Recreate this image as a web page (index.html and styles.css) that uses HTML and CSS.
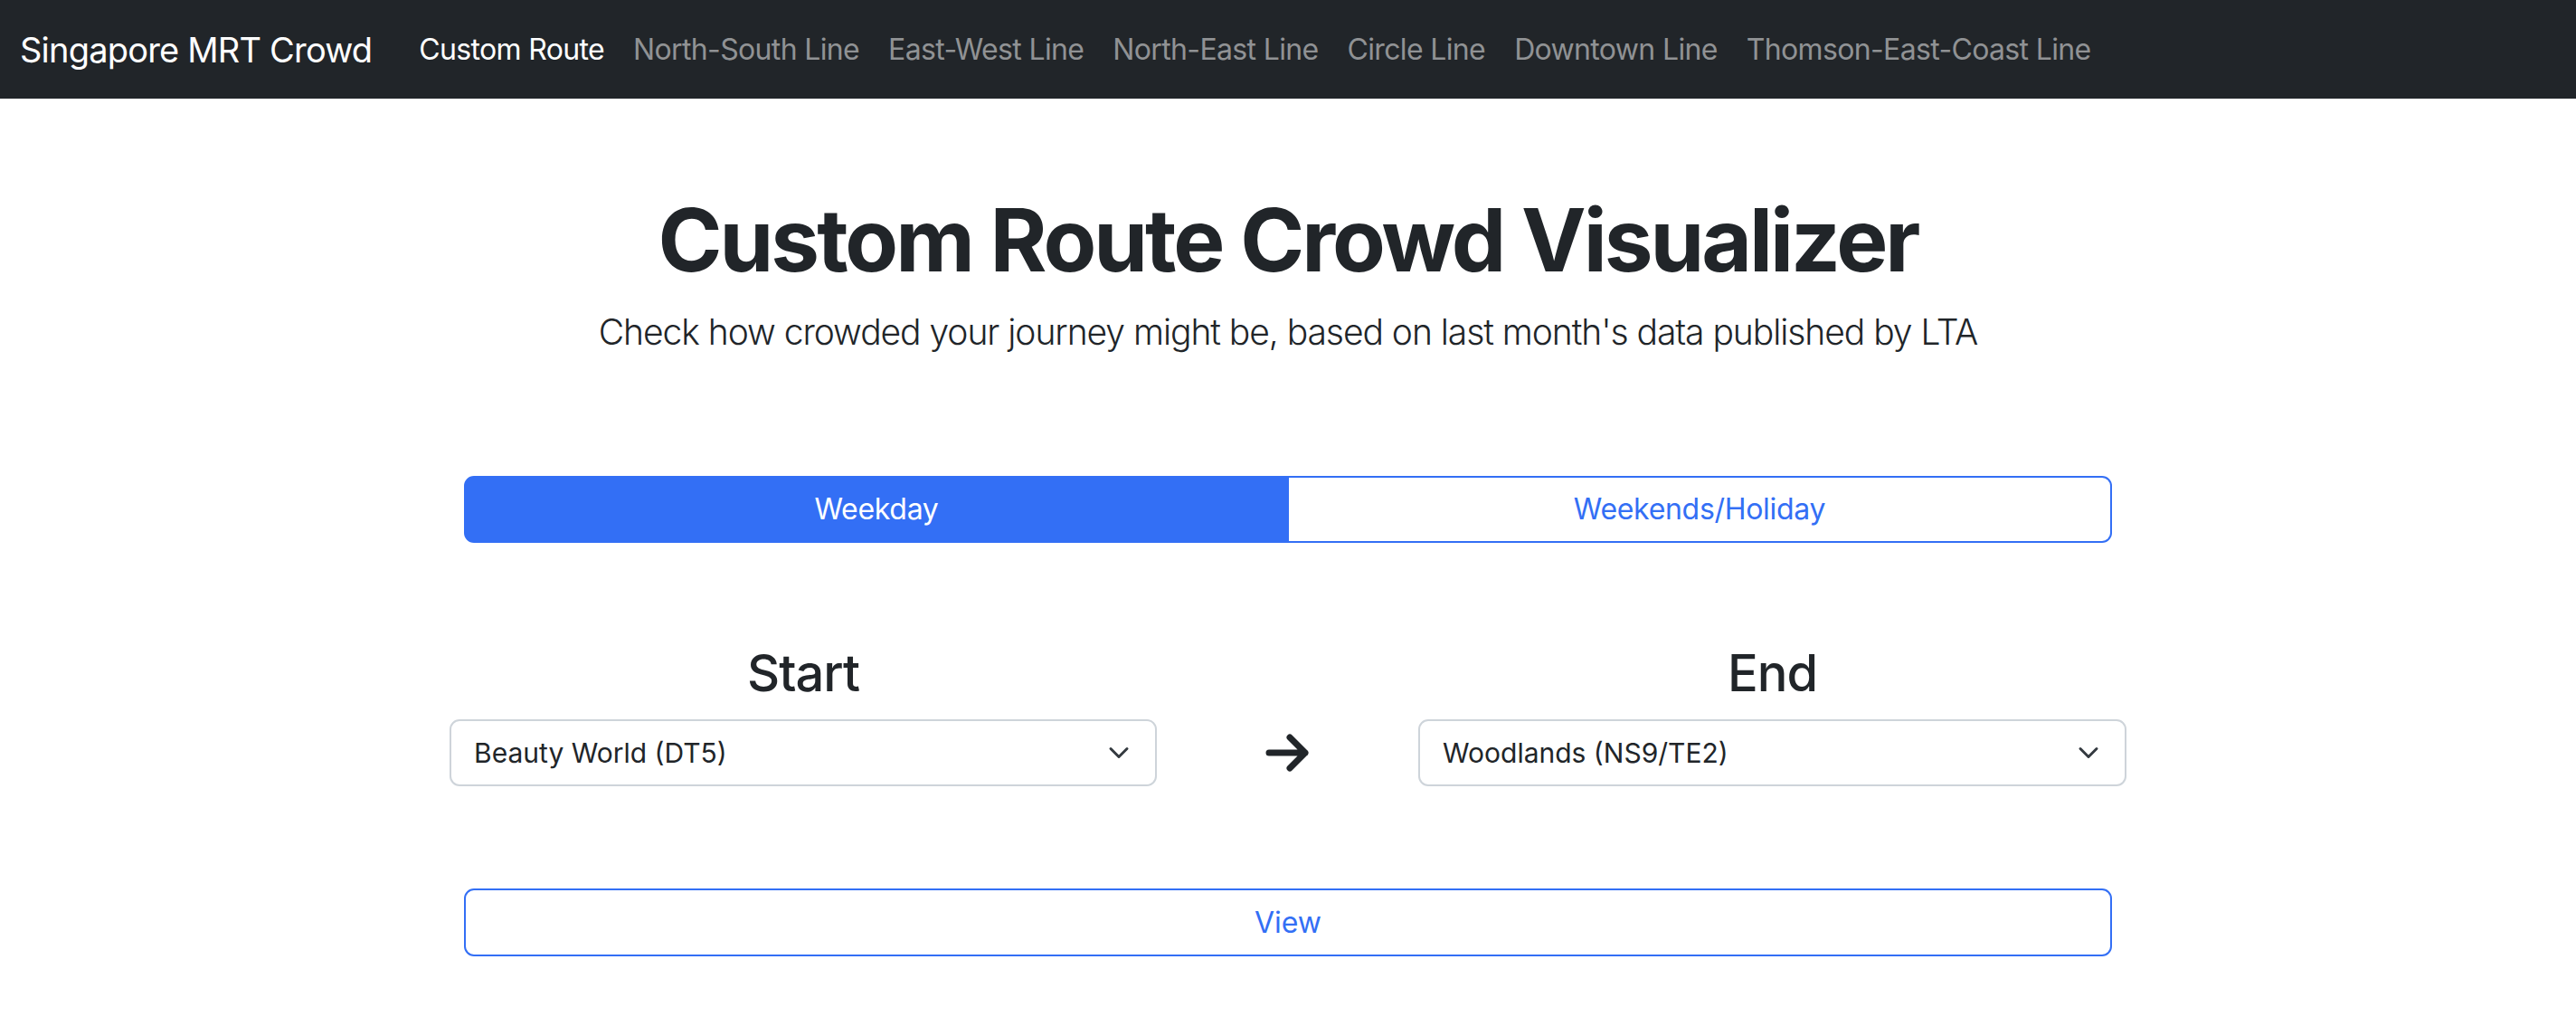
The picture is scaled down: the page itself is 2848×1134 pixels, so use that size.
FILE: index.html
```html
<!DOCTYPE html>
<html lang="en">
<head>
<meta charset="utf-8">
<title>Singapore MRT Crowd</title>
<link rel="stylesheet" href="styles.css">
</head>
<body>
<nav class="navbar">
  <a class="brand" href="#">Singapore MRT Crowd</a>
  <ul class="nav">
    <li><a class="nav-link active" href="#">Custom Route</a></li>
    <li><a class="nav-link" href="#">North-South Line</a></li>
    <li><a class="nav-link" href="#">East-West Line</a></li>
    <li><a class="nav-link" href="#">North-East Line</a></li>
    <li><a class="nav-link" href="#">Circle Line</a></li>
    <li><a class="nav-link" href="#">Downtown Line</a></li>
    <li><a class="nav-link" href="#">Thomson-East-Coast Line</a></li>
  </ul>
</nav>
<main class="main">
  <h1 class="title">Custom Route Crowd Visualizer</h1>
  <p class="lead">Check how crowded your journey might be, based on last month's data published by LTA</p>
  <div class="toggle">
    <button class="seg seg-active">Weekday</button>
    <button class="seg">Weekends/Holiday</button>
  </div>
  <div class="route">
    <div class="stop">
      <h2 class="stop-label">Start</h2>
      <div class="select">
        <span>Beauty World (DT5)</span>
        <svg class="chev" width="32" height="24" viewBox="0 0 16 16"><path d="M2 5l6 6 6-6" fill="none" stroke="#343a40" stroke-width="2" stroke-linecap="round" stroke-linejoin="round"/></svg>
      </div>
    </div>
    <div class="arrow">
      <svg width="50" height="42" viewBox="0 0 50 42"><path d="M4 21h40M27 4l17 17-17 17" fill="none" stroke="#212529" stroke-width="7" stroke-linecap="round" stroke-linejoin="round"/></svg>
    </div>
    <div class="stop">
      <h2 class="stop-label">End</h2>
      <div class="select">
        <span>Woodlands (NS9/TE2)</span>
        <svg class="chev" width="32" height="24" viewBox="0 0 16 16"><path d="M2 5l6 6 6-6" fill="none" stroke="#343a40" stroke-width="2" stroke-linecap="round" stroke-linejoin="round"/></svg>
      </div>
    </div>
  </div>
  <button class="view">View</button>
</main>
</body>
</html>
```
FILE: styles.css
```css
body {
  margin: 0;
  font-family: Inter, "Noto Sans", sans-serif;
  color: #212529;
  background: #fff;
}

.navbar {
  height: 109px;
  background: #212529;
  display: flex;
  align-items: center;
  padding: 0 22px;
  box-sizing: border-box;
}

.brand {
  font-size: 38px;
  color: #fff;
  text-decoration: none;
  margin-right: 36px;
  letter-spacing: -0.8px;
}

.nav {
  display: flex;
  list-style: none;
  margin: 0;
  padding: 0;
}

.nav-link {
  display: block;
  font-size: 32px;
  color: #909294;
  text-decoration: none;
  padding: 0 16px;
  letter-spacing: -0.65px;
}

.nav-link.active {
  color: #fff;
}

.main {
  width: 1822px;
  margin: 0 auto;
  display: flex;
  flex-direction: column;
  align-items: center;
}

.title {
  font-size: 96px;
  font-weight: 700;
  line-height: 1.2;
  margin: 99px 0 15px;
  letter-spacing: -3px;
}

.lead {
  font-size: 39px;
  font-weight: 300;
  line-height: 1.5;
  margin: 0 0 129px;
  letter-spacing: -1.05px;
}

.toggle {
  display: flex;
  width: 100%;
  height: 74px;
}

.seg {
  flex: 1;
  font-family: inherit;
  font-size: 32px;
  border: 2px solid #336ff5;
  background: #fff;
  color: #336ff5;
  margin: 0;
  padding: 0;
  letter-spacing: -0.3px;
}

.seg:first-child {
  border-radius: 11px 0 0 11px;
}

.seg:last-child {
  border-radius: 0 11px 11px 0;
  border-left: 0;
}

.seg-active {
  background: #336ff5;
  color: #fff;
}

.route {
  display: grid;
  grid-template-columns: 782px 1fr 783px;
  width: 1854px;
  margin-top: 111px;
  align-items: end;
}

.stop {
  display: flex;
  flex-direction: column;
  align-items: stretch;
}

.stop-label {
  font-size: 56px;
  font-weight: 500;
  line-height: 1.2;
  text-align: center;
  margin: 0 0 17px;
  letter-spacing: -1px;
}

.select {
  height: 74px;
  box-sizing: border-box;
  border: 2px solid #ced4da;
  border-radius: 11px;
  display: flex;
  align-items: center;
  justify-content: space-between;
  padding: 0 24px 0 25px;
  font-size: 30px;
}

.arrow {
  height: 74px;
  display: flex;
  align-items: center;
  justify-content: center;
}

.view {
  width: 100%;
  height: 75px;
  margin-top: 113px;
  font-family: inherit;
  font-size: 32px;
  color: #336ff5;
  background: #fff;
  border: 2px solid #336ff5;
  border-radius: 11px;
}
```
